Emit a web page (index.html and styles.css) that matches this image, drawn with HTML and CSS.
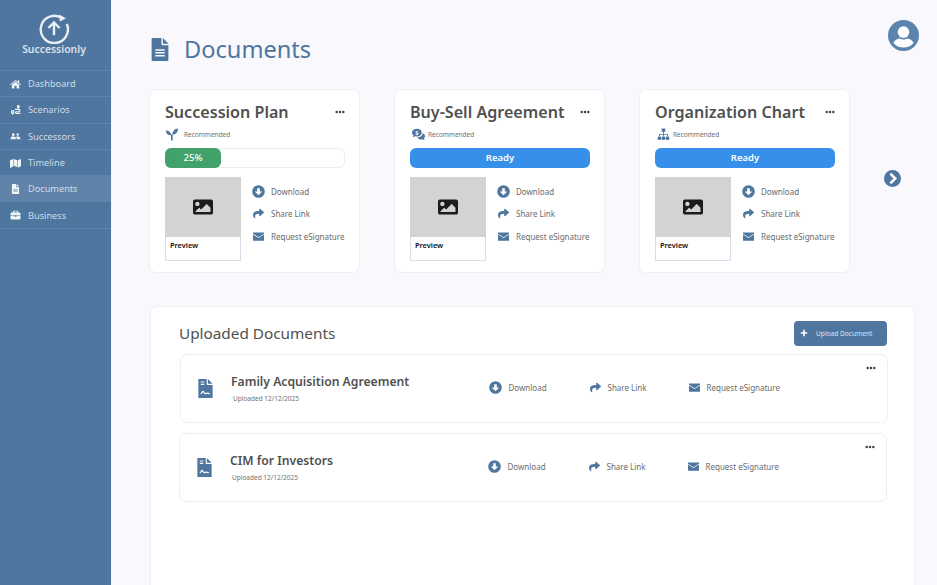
FILE: index.html
```html
<!DOCTYPE html>
<html lang="en">
<head>
<meta charset="utf-8">
<title>Documents</title>
<link rel="stylesheet" href="styles.css">
</head>
<body>
<svg class="defs" aria-hidden="true">
  <defs>
    <symbol id="i-down" viewBox="0 0 512 512"><path d="M256 8a248 248 0 1 0 0 496 248 248 0 0 0 0-496zm-40 116h80c7 0 12 5 12 12v116h72c11 0 16 13 8 21L264 397c-5 5-11 5-16 0L124 273c-8-8-3-21 8-21h72V136c0-7 5-12 12-12z"/></symbol>
    <symbol id="i-share" viewBox="0 0 512 512"><path d="M503.7 189.800 327.700 37.900C312.300 24.500 288 35.300 288 56v80.100C127.400 137.900 0 170.100 0 322.300c0 61.400 39.600 122.300 83.300 154.100 13.700 9.900 33.100-2.500 28.100-18.600-45.300-144.900 21.500-183.400 176.600-185.600V360c0 20.700 24.300 31.500 39.700 18.200l176-152c11.100-9.600 11.100-26.800 0-36.400z"/></symbol>
    <symbol id="i-mail" viewBox="0 0 512 512"><path d="M0 64h512v60L256 290 0 124zM0 164l256 166 256-166v284H0z"/></symbol>
    <symbol id="i-dots" viewBox="0 0 24 8"><circle cx="4" cy="4" r="3"/><circle cx="12" cy="4" r="3"/><circle cx="20" cy="4" r="3"/></symbol>
    <symbol id="i-image" viewBox="0 0 512 512"><path fill-rule="evenodd" d="M48 64h416c26 0 48 22 48 48v288c0 26-22 48-48 48H48c-26 0-48-22-48-48V112c0-26 22-48 48-48zm64 56a56 56 0 1 0 0 112 56 56 0 0 0 0-112zM64 384h384V272l-88-88c-5-5-12-5-17 0L208 320l-40-40c-5-5-12-5-17 0l-87 87z"/></symbol>
    <symbol id="i-contract" viewBox="0 0 384 512"><path fill-rule="evenodd" d="M0 0h224v136c0 13 11 24 24 24h136v352H0zM256 0l128 128H256zM64 64v32h96V64zm0 64v32h96v-32zm-4 262 10 26c28-8 40-44 58-66 14 30 30 56 62 60 24 3 34-14 50-14 14 0 30 14 68 14v-30c-28 0-44-14-66-14-20 0-32 16-48 14-26-3-34-52-60-62-36-12-50 60-74 72z"/></symbol>
    <symbol id="i-preview-doc" viewBox="0 0 384 512"><path fill-rule="evenodd" d="M24 0h200v136c0 13 11 24 24 24h136v328c0 13-11 24-24 24H24c-13 0-24-11-24-24V24C0 11 11 0 24 0zM256 0l128 128H256zM88 250v32h208v-32zm0 64v32h208v-32zm0 64v32h208v-32z"/></symbol>
  </defs>
</svg>
<div class="app">
  <aside class="sidebar">
    <div class="brand">
      <svg class="brand-logo" viewBox="0 0 40 40"><path class="logo-ring" d="M31 8.500A17 17 0 1 0 36 15"/><path class="logo-head" d="M27 3l8 5-8 4z"/><path class="logo-arrow" d="M20 29V13M13 20l7-7 7 7"/></svg>
      <span class="brand-name">Successionly</span>
    </div>
    <nav class="nav">
      <a class="nav-item"><svg class="nav-icon" viewBox="0 0 576 512"><path d="M288 40 0 280l30 34 258-214 258 214 30-34-94-78V64h-72v78zM96 300v172c0 9 7 16 16 16h120V352h112v136h120c9 0 16-7 16-16V300L288 140z"/></svg><span>Dashboard</span></a>
      <a class="nav-item"><svg class="nav-icon" viewBox="0 0 512 512"><path fill-rule="evenodd" d="M400 0a80 80 0 0 0-80 80c0 36 50 96 68 112h24c18-16 68-76 68-112a80 80 0 0 0-80-80zM112 256a96 96 0 0 0-96 96c0 44 60 118 84 150h24c24-32 84-106 84-150a96 96 0 0 0-96-96zm0 64a32 32 0 1 1 0 64 32 32 0 0 1 0-64zM230 256h190a30 30 0 0 1 0 60H300a70 70 0 0 0 0 140H512v-60H300a10 10 0 0 1 0-20h120a90 90 0 0 0 0-180H230z"/></svg><span>Scenarios</span></a>
      <a class="nav-item"><svg class="nav-icon" viewBox="0 0 640 512"><path d="M192 96a80 80 0 1 1 0 160 80 80 0 0 1 0-160zm256 0a72 72 0 1 1 0 144 72 72 0 0 1 0-144zM40 448v-60c0-60 50-100 100-100h104c50 0 100 40 100 100v60zm344 0v-60c0-40-14-74-38-96 24-8 50-12 76-12h60c60 0 118 40 118 100v68z"/></svg><span>Successors</span></a>
      <a class="nav-item"><svg class="nav-icon" viewBox="0 0 576 512"><path d="M0 118l168-70v392L0 512zM196 48l184 64v352l-184-64zM408 110l168-68v390l-168 70z"/></svg><span>Timeline</span></a>
      <a class="nav-item is-active"><svg class="nav-icon" viewBox="0 0 384 512"><use href="#i-preview-doc"/></svg><span>Documents</span></a>
      <a class="nav-item"><svg class="nav-icon" viewBox="0 0 512 512"><path d="M170 32h172c26 0 48 22 48 48v48h74c26 0 48 22 48 48v92H0v-92c0-26 22-48 48-48h74V80c0-26 22-48 48-48zm4 50v46h164V82zM0 298h208v50h96v-50h208v134c0 26-22 48-48 48H48c-26 0-48-22-48-48z"/></svg><span>Business</span></a>
    </nav>
  </aside>
  <main class="main">
    <header class="page-head">
      <h1 class="page-title"><svg class="title-icon" viewBox="0 0 384 512"><use href="#i-preview-doc"/></svg>Documents</h1>
      <svg class="avatar" viewBox="0 0 32 32"><circle class="avatar-bg" cx="16" cy="16" r="16"/><circle class="avatar-fg" cx="16" cy="12.500" r="6"/><path class="avatar-fg" d="M5.500 23.500c2-3.500 5-4.500 6.500-4.500 1.500.8 2.500 1 4 1s2.500-.2 4-1c1.500 0 4.500 1 6.500 4.500C24 27 20 28.500 16 28.500S8 27 5.500 23.500z"/></svg>
    </header>

    <section class="cards">
      <article class="card">
        <div class="card-head"><h2 class="card-title">Succession Plan</h2><svg class="dots"><use href="#i-dots"/></svg></div>
        <div class="card-tag">
          <svg class="tag-icon" viewBox="0 0 16 16"><path d="M.500 3C4 3 7 5 7 9 3.500 9 .500 7 .500 3zM15.500 .500C15.500 5 12.500 8 8.500 8c0-4 3-7.500 7-7.500zM6.800 8h2v7.500h-2z"/></svg>
          <span>Recommended</span>
        </div>
        <div class="progress"><div class="progress-fill" style="width:31.500%">25%</div></div>
        <div class="card-body">
          <div class="preview"><div class="preview-img"><svg class="preview-icon"><use href="#i-image"/></svg></div><div class="preview-label">Preview</div></div>
          <ul class="actions">
            <li class="action"><svg class="action-icon"><use href="#i-down"/></svg>Download</li>
            <li class="action"><svg class="action-icon is-small"><use href="#i-share"/></svg>Share Link</li>
            <li class="action"><svg class="action-icon is-small"><use href="#i-mail"/></svg>Request eSignature</li>
          </ul>
        </div>
      </article>

      <article class="card">
        <div class="card-head"><h2 class="card-title">Buy-Sell Agreement</h2><svg class="dots"><use href="#i-dots"/></svg></div>
        <div class="card-tag">
          <svg class="tag-icon is-inset" viewBox="0 0 16 16"><path fill-rule="evenodd" d="M6 1c3.300 0 6 2 6 4.700s-2.700 4.700-6 4.700c-.7 0-1.400-.1-2-.3L1 11.500l.9-2.600C.7 8 0 6.900 0 5.700 0 3 2.700 1 6 1z"/><path d="M13 6.500c1.800.6 3 1.900 3 3.500 0 1-.5 1.900-1.300 2.600l.8 2.400-2.800-1.300c-.6.200-1.100.3-1.700.3-2 0-3.700-1-4.400-2.400 3.400-.1 6.400-2 6.400-5.100z"/><text class="tag-dollar" x="6" y="8.300">$</text></svg>
          <span>Recommended</span>
        </div>
        <div class="status">Ready</div>
        <div class="card-body">
          <div class="preview"><div class="preview-img"><svg class="preview-icon"><use href="#i-image"/></svg></div><div class="preview-label">Preview</div></div>
          <ul class="actions">
            <li class="action"><svg class="action-icon"><use href="#i-down"/></svg>Download</li>
            <li class="action"><svg class="action-icon is-small"><use href="#i-share"/></svg>Share Link</li>
            <li class="action"><svg class="action-icon is-small"><use href="#i-mail"/></svg>Request eSignature</li>
          </ul>
        </div>
      </article>

      <article class="card">
        <div class="card-head"><h2 class="card-title">Organization Chart</h2><svg class="dots"><use href="#i-dots"/></svg></div>
        <div class="card-tag">
          <svg class="tag-icon is-inset" viewBox="0 0 16 16"><path d="M5.800 .500h4.400v4.200H5.800zM7.500 4.700h1v2.600h5v2.400h-1V8.300h-4v1.400h-1V8.300h-4v1.400h-1V7.300h5z"/><circle cx="3" cy="12.500" r="2.300"/><circle cx="8" cy="12.500" r="2.300"/><circle cx="13" cy="12.500" r="2.300"/></svg>
          <span>Recommended</span>
        </div>
        <div class="status">Ready</div>
        <div class="card-body">
          <div class="preview"><div class="preview-img"><svg class="preview-icon"><use href="#i-image"/></svg></div><div class="preview-label">Preview</div></div>
          <ul class="actions">
            <li class="action"><svg class="action-icon"><use href="#i-down"/></svg>Download</li>
            <li class="action"><svg class="action-icon is-small"><use href="#i-share"/></svg>Share Link</li>
            <li class="action"><svg class="action-icon is-small"><use href="#i-mail"/></svg>Request eSignature</li>
          </ul>
        </div>
      </article>

      <svg class="next" viewBox="0 0 24 24"><circle class="next-bg" cx="12" cy="12" r="12"/><path class="next-fg" d="M9 5l7 7-7 7"/></svg>
    </section>

    <section class="panel">
      <div class="panel-head">
        <h2 class="panel-title">Uploaded Documents</h2>
        <button class="upload"><svg class="upload-icon" viewBox="0 0 10 10"><path d="M5 1v8M1 5h8"/></svg>Upload Document</button>
      </div>
      <div class="doc">
        <svg class="doc-icon"><use href="#i-contract"/></svg>
        <div class="doc-info"><h3 class="doc-name">Family Acquisition Agreement</h3><p class="doc-date">Uploaded 12/12/2025</p></div>
        <ul class="doc-actions">
          <li class="action"><svg class="action-icon"><use href="#i-down"/></svg>Download</li>
          <li class="action"><svg class="action-icon is-small"><use href="#i-share"/></svg>Share Link</li>
          <li class="action"><svg class="action-icon is-small"><use href="#i-mail"/></svg>Request eSignature</li>
        </ul>
        <svg class="dots doc-dots"><use href="#i-dots"/></svg>
      </div>
      <div class="doc doc-second">
        <svg class="doc-icon"><use href="#i-contract"/></svg>
        <div class="doc-info"><h3 class="doc-name">CIM for Investors</h3><p class="doc-date">Uploaded 12/12/2025</p></div>
        <ul class="doc-actions">
          <li class="action"><svg class="action-icon"><use href="#i-down"/></svg>Download</li>
          <li class="action"><svg class="action-icon is-small"><use href="#i-share"/></svg>Share Link</li>
          <li class="action"><svg class="action-icon is-small"><use href="#i-mail"/></svg>Request eSignature</li>
        </ul>
        <svg class="dots doc-dots"><use href="#i-dots"/></svg>
      </div>
    </section>
  </main>
</div>
</body>
</html>
```
FILE: styles.css
```css
* { box-sizing: border-box; }
html, body { margin: 0; height: 100%; overflow: hidden; }
body { font-family: "Noto Sans", sans-serif; background: #f8f8fd; color: #505050; }
.defs { display: none; }
ul { list-style: none; margin: 0; padding: 0; }
h1, h2, h3, p { margin: 0; }

.app { display: flex; height: 585px; overflow: hidden; }

.sidebar { width: 112px; flex: none; background: #4f769f; border-right: 1px solid #f0f3f8; }
.brand { height: 70px; display: flex; flex-direction: column; align-items: center; padding: 12px 3px 0 0; }
.brand-logo { width: 32px; height: 32px; fill: none; stroke: #e9eef4; flex: none; }
.logo-ring { stroke-width: 3; }
.logo-head { fill: #e9eef4; stroke: none; }
.logo-arrow { stroke-width: 3; }
.brand-name { font-size: 10.400px; font-weight: 600; color: #d9e2ec; line-height: 13px; margin-top: -1px; }
.nav { border-top: 1px solid #5f84aa; }
.nav-item { display: flex; align-items: center; height: 26.300px; padding-left: 10px; font-size: 9.200px; color: #d0dbe6; border-bottom: 1px solid #5f84aa; }
.nav-item.is-active { background: #6084a9; border-bottom-color: #6084a9; }
.nav-icon { width: 11px; height: 10px; fill: #f0f3f7; margin-right: 7px; flex: none; }

.main { flex: 1; min-width: 0; padding: 20px 23px 0 37px; }
.page-head { height: 69px; display: flex; justify-content: space-between; align-items: flex-start; margin-right: -5px; }
.page-title { display: flex; align-items: center; gap: 15px; font-size: 23.600px; font-weight: 400; color: #4f769f; height: 58px; line-height: 58px; margin-left: 2px; }
.title-icon { width: 18px; height: 23px; fill: #4f769f; }
.avatar { width: 31px; height: 31px; flex: none; }
.avatar-bg { fill: #5b84ad; }
.avatar-fg { fill: #fff; }

.cards { display: flex; gap: 34px; align-items: flex-start; position: relative; }
.card { width: 211px; height: 184px; background: #fff; border: 1px solid #eeeef5; border-radius: 7px; padding: 11px 14px 0 15px; }
.card-head { display: flex; justify-content: space-between; align-items: center; height: 22px; }
.card-title { font-size: 16.100px; font-weight: 600; color: #505050; line-height: 22px; white-space: nowrap; }
.dots { width: 10px; height: 4px; fill: #444; flex: none; }
.card-tag { display: flex; align-items: center; height: 16px; margin-top: 3px; font-size: 6.500px; color: #707070; }
.tag-icon { width: 14px; height: 13px; fill: #4f769f; margin-right: 5px; flex: none; }
.tag-icon.is-inset { width: 13px; margin: 0 3px 0 2px; }
.tag-dollar { font: 700 7px "Noto Sans", sans-serif; fill: #fff; text-anchor: middle; }
.progress { height: 20px; margin-top: 6px; background: #fff; border: 1px solid #eeeef2; border-radius: 6px; }
.progress-fill { height: 20px; margin: -1px 0 0 -1px; background: #42a26c; border-radius: 6px; color: #fff; font-size: 9.500px; font-weight: 500; line-height: 20px; text-align: center; }
.status { height: 20px; margin-top: 6px; background: #368fe8; border-radius: 6px; color: #fff; font-size: 9.500px; font-weight: 600; line-height: 20px; text-align: center; }
.card-body { display: flex; margin-top: 9px; }
.preview { width: 76px; height: 84px; flex: none; background: #fff; border: 1px solid #d5dfe9; border-top: 0; }
.preview-img { height: 60px; margin: 0 -1px; background: #d2d3d2; display: flex; align-items: center; justify-content: center; }
.preview-icon { width: 20px; height: 20px; fill: #1c1c1c; }
.preview-label { font-size: 7.400px; font-weight: 600; color: #111; padding: 3px 0 0 4px; line-height: 11px; }
.actions { display: flex; flex-direction: column; gap: 8.800px; margin: 7.750px 0 0 11px; }
.action { display: flex; align-items: center; gap: 6px; height: 13.500px; font-size: 8px; color: #6b6b6b; white-space: nowrap; }
.action-icon { width: 13px; height: 13px; fill: #4f769f; flex: none; }
.action-icon.is-small { width: 11px; height: 11px; margin: 0 1px; }
.next { width: 17px; height: 17px; position: absolute; left: 735px; top: 81px; }
.next-bg { fill: #4f769f; }
.next-fg { fill: none; stroke: #fff; stroke-width: 3.500; }

.panel { width: 765px; height: 279px; margin: 33px 0 0 1px; background: #fff; border: 1px solid #eeeef5; border-bottom: 0; border-radius: 7px 7px 0 0; padding: 13px 27px 0 28px; }
.panel-head { display: flex; justify-content: space-between; align-items: center; height: 26px; }
.panel-title { font-size: 15.300px; font-weight: 400; color: #505050; }
.upload { display: flex; align-items: center; gap: 8px; width: 93px; height: 25px; padding: 0 0 0 6px; background: #4f769f; border: 0; border-radius: 4px; color: #dde5ee; font-family: inherit; font-size: 6.600px; white-space: nowrap; }
.upload-icon { width: 8px; height: 8px; fill: none; stroke: #fff; stroke-width: 2; flex: none; }
.doc { width: 708px; height: 69px; margin: 8px 0 0 1px; background: #fff; border: 1px solid #eeeef3; border-radius: 7px; display: flex; align-items: center; padding: 0 0 0 17px; position: relative; }
.doc-second { margin: 10px 0 0 0; }
.doc-icon { width: 15px; height: 19px; fill: #4f769f; flex: none; }
.doc-info { width: 258px; margin-left: 18px; }
.doc-name { font-size: 12.200px; font-weight: 600; color: #505050; line-height: 16px; }
.doc-date { font-size: 6.500px; color: #707070; margin: 4px 0 0 2px; line-height: 9px; }
.doc-actions { display: flex; padding-bottom: 2px; }
.doc-actions .action { gap: 6.500px; }
.doc-actions .action-icon.is-small { margin: 0; }
.doc-actions .action:nth-child(1) { width: 101px; }
.doc-actions .action:nth-child(2) { width: 99px; }
.doc-dots { position: absolute; right: 11px; top: 11px; }
```
